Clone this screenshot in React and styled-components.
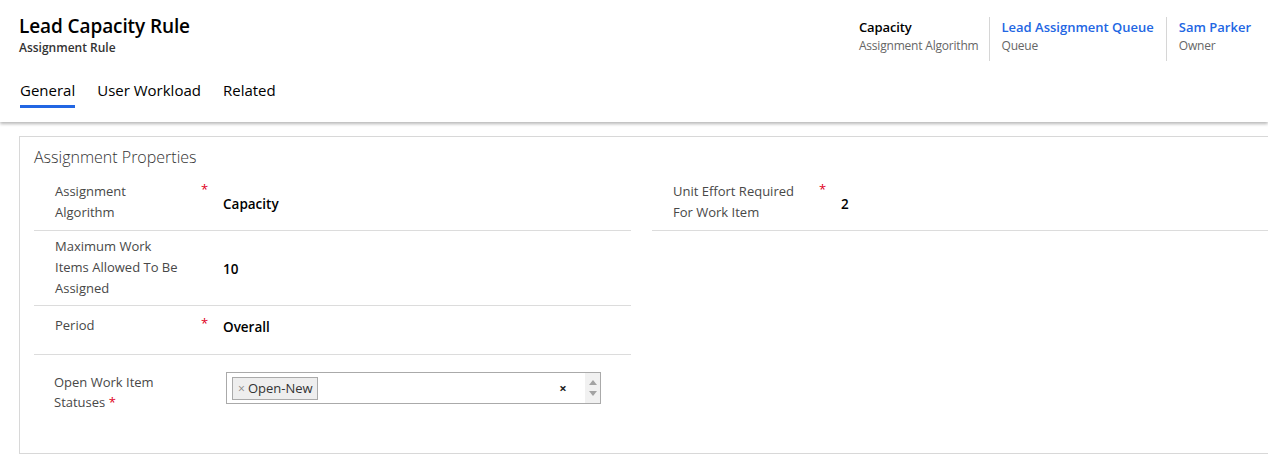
import React from "react";
import styled, { createGlobalStyle } from "styled-components";

const GlobalStyle = createGlobalStyle`
    body{
        margin: 0;
        background: #ffffff;
        font-family: "Segoe UI", "Open Sans", "Noto Sans", sans-serif;
        color: #000;
        overflow: hidden;
    }
`

const Page = styled.div`
    width: 1268px;
    height: 455px;
    overflow: hidden;
`

const Header = styled.header`
    height: 122px;
    background: #ffffff;
    box-shadow: 0 2px 3px rgba(0, 0, 0, 0.28);
    position: relative;
    z-index: 1;
    display: flex;
    flex-direction: column;
`

const TopRow = styled.div`
    display: flex;
    justify-content: space-between;
    align-items: flex-start;
    padding: 13px 0 0 19px;
`

const TitleBlock = styled.div`
    display: flex;
    flex-direction: column;
`

const Title = styled.h1`
    margin: 0;
    font-size: 19px;
    font-weight: 600;
    line-height: 26px;
    letter-spacing: -0.1px;
`

const Subtitle = styled.div`
    font-size: 12px;
    font-weight: 600;
    color: #333;
    line-height: 17px;
`

const HeaderFields = styled.div`
    display: flex;
    padding-top: 4px;
`

const HeaderField = styled.div`
    display: flex;
    flex-direction: column;
    padding: 1px 12px 6px 12px;
    border-left: ${(p) => (p.$first ? "none" : "1px solid #d6d6d6")};
    &:last-child{
        padding-right: 17px;
    }
    &:first-child{
        padding-right: 10px;
    }
`

const FieldValue = styled.div`
    font-size: 13px;
    font-weight: 600;
    line-height: 19px;
    color: ${(p) => (p.$link ? "#2266e3" : "#000")};
    letter-spacing: ${(p) => (p.$link ? 0 : -0.1)}px;
`

const FieldName = styled.div`
    font-size: 12px;
    color: #666;
    line-height: 18px;
    letter-spacing: -0.2px;
`

const Tabs = styled.nav`
    display: flex;
    gap: 22px;
    padding: 0 0 0 20px;
    margin-top: 19px;
`

const Tab = styled.div`
    font-size: 15px;
    line-height: 20px;
    color: #000;
    padding-bottom: 5px;
    border-bottom: 3px solid ${(p) => (p.$active ? "#2266e3" : "transparent")};
`

const Body = styled.main`
    padding: 14px 0 0 19px;
`

const Card = styled.section`
    width: 1270px;
    height: 318px;
    border: 1px solid #d8d8d8;
    border-right: none;
    padding: 8px 0 0 14px;
    box-sizing: border-box;
`

const SectionTitle = styled.h2`
    margin: 0 0 5px 0;
    font-size: 16px;
    font-weight: 300;
    color: #333;
    line-height: 25px;
`

const Columns = styled.div`
    display: grid;
    grid-template-columns: 597px 1fr;
    column-gap: 21px;
    align-items: start;
`

const Column = styled.div`
    display: flex;
    flex-direction: column;
`

const Row = styled.div`
    display: grid;
    grid-template-columns: 146px 22px 1fr;
    align-items: center;
    min-height: ${(p) => p.$min || 48}px;
    padding: ${(p) => p.$pad || "6px 0 7px 21px"};
    box-sizing: border-box;
    border-bottom: 1px solid #dcdcdc;
`

const Label = styled.div`
    font-size: 13px;
    line-height: 21px;
    color: #484848;
    align-self: ${(p) => p.$align || "center"};
`

const Required = styled.span`
    color: #e0001b;
    font-size: 13px;
    align-self: start;
    line-height: 14px;
    margin-top: 1px;
`

const Value = styled.div`
    font-size: 13.5px;
    font-weight: 600;
    color: #000;
    line-height: 20px;
    align-self: ${(p) => p.$align || "center"};
    padding-top: ${(p) => p.$shift || 0}px;
`

const MultiRow = styled.div`
    display: grid;
    grid-template-columns: 172px 375px;
    align-items: start;
    padding: 17px 0 0 20px;
`

const MultiLabel = styled.div`
    font-size: 13px;
    line-height: 20px;
    color: #484848;
    span{
        color: #e0001b;
    }
`

const Select = styled.div`
    display: flex;
    height: 32px;
    border: 1px solid #aaaaaa;
    box-sizing: border-box;
`

const TagArea = styled.div`
    flex: 1;
    display: flex;
    align-items: center;
    padding: 0 5px;
`

const Tag = styled.div`
    display: flex;
    align-items: center;
    gap: 3px;
    height: 23px;
    padding: 0 4px 0 5px;
    box-sizing: border-box;
    background: #eeeeee;
    border: 1px solid #aaaaaa;
    font-size: 13px;
    color: #333;
    span{
        color: #888;
        font-size: 12px;
    }
`

const Clear = styled.div`
    width: 44px;
    display: flex;
    align-items: center;
    justify-content: center;
    font-size: 13px;
    font-weight: 700;
    color: #222;
`

const Spinner = styled.div`
    width: 15px;
    background: #f1f1f1;
    display: flex;
    flex-direction: column;
    align-items: center;
    justify-content: space-around;
    padding: 4px 0;
    box-sizing: border-box;
`

const Arrow = styled.div`
    width: 0;
    height: 0;
    border-left: 4px solid transparent;
    border-right: 4px solid transparent;
    ${(p) => (p.$up ? "border-bottom: 5px solid #a3a3a3;" : "border-top: 5px solid #a3a3a3;")}
`

const fields = [
    { value: "Capacity", name: "Assignment Algorithm" },
    { value: "Lead Assignment Queue", name: "Queue", link: true },
    { value: "Sam Parker", name: "Owner", link: true },
]

const leftRows = [
    { label: ["Assignment", "Algorithm"], value: "Capacity", required: true, min: 56, shift: 3 },
    { label: ["Maximum Work", "Items Allowed To Be", "Assigned"], value: "10", min: 75, shift: 2, pad: "5px 0 6px 21px" },
    { label: ["Period"], value: "Overall", required: true, min: 49, shift: 10, align: "start", pad: "9px 0 8px 21px" },
]

const App = () => {
    return(
        <Page>
            <GlobalStyle />
            <Header>
                <TopRow>
                    <TitleBlock>
                        <Title>Lead Capacity Rule</Title>
                        <Subtitle>Assignment Rule</Subtitle>
                    </TitleBlock>
                    <HeaderFields>
                        {fields.map((f, i) => (
                            <HeaderField key={f.name} $first={i === 0}>
                                <FieldValue $link={f.link}>{f.value}</FieldValue>
                                <FieldName>{f.name}</FieldName>
                            </HeaderField>
                        ))}
                    </HeaderFields>
                </TopRow>
                <Tabs>
                    <Tab $active>General</Tab>
                    <Tab>User Workload</Tab>
                    <Tab>Related</Tab>
                </Tabs>
            </Header>

            <Body>
                <Card>
                    <SectionTitle>Assignment Properties</SectionTitle>
                    <Columns>
                        <Column>
                            {leftRows.map((r) => (
                                <Row key={r.value} $min={r.min} $pad={r.pad}>
                                    <Label $align={r.align}>
                                        {r.label.map((l) => <div key={l}>{l}</div>)}
                                    </Label>
                                    {r.required ? <Required>*</Required> : <span />}
                                    <Value $shift={r.align ? 2 : r.shift} $align={r.align}>{r.value}</Value>
                                </Row>
                            ))}
                            <MultiRow>
                                <MultiLabel>
                                    <div>Open Work Item</div>
                                    <div>Statuses <span>*</span></div>
                                </MultiLabel>
                                <Select>
                                    <TagArea>
                                        <Tag><span>×</span>Open-New</Tag>
                                    </TagArea>
                                    <Clear>×</Clear>
                                    <Spinner>
                                        <Arrow $up />
                                        <Arrow />
                                    </Spinner>
                                </Select>
                            </MultiRow>
                        </Column>
                        <Column>
                            <Row $min={56}>
                                <Label>
                                    <div>Unit Effort Required</div>
                                    <div>For Work Item</div>
                                </Label>
                                <Required>*</Required>
                                <Value $shift={3}>2</Value>
                            </Row>
                        </Column>
                    </Columns>
                </Card>
            </Body>
        </Page>
    )
}

export default App;
